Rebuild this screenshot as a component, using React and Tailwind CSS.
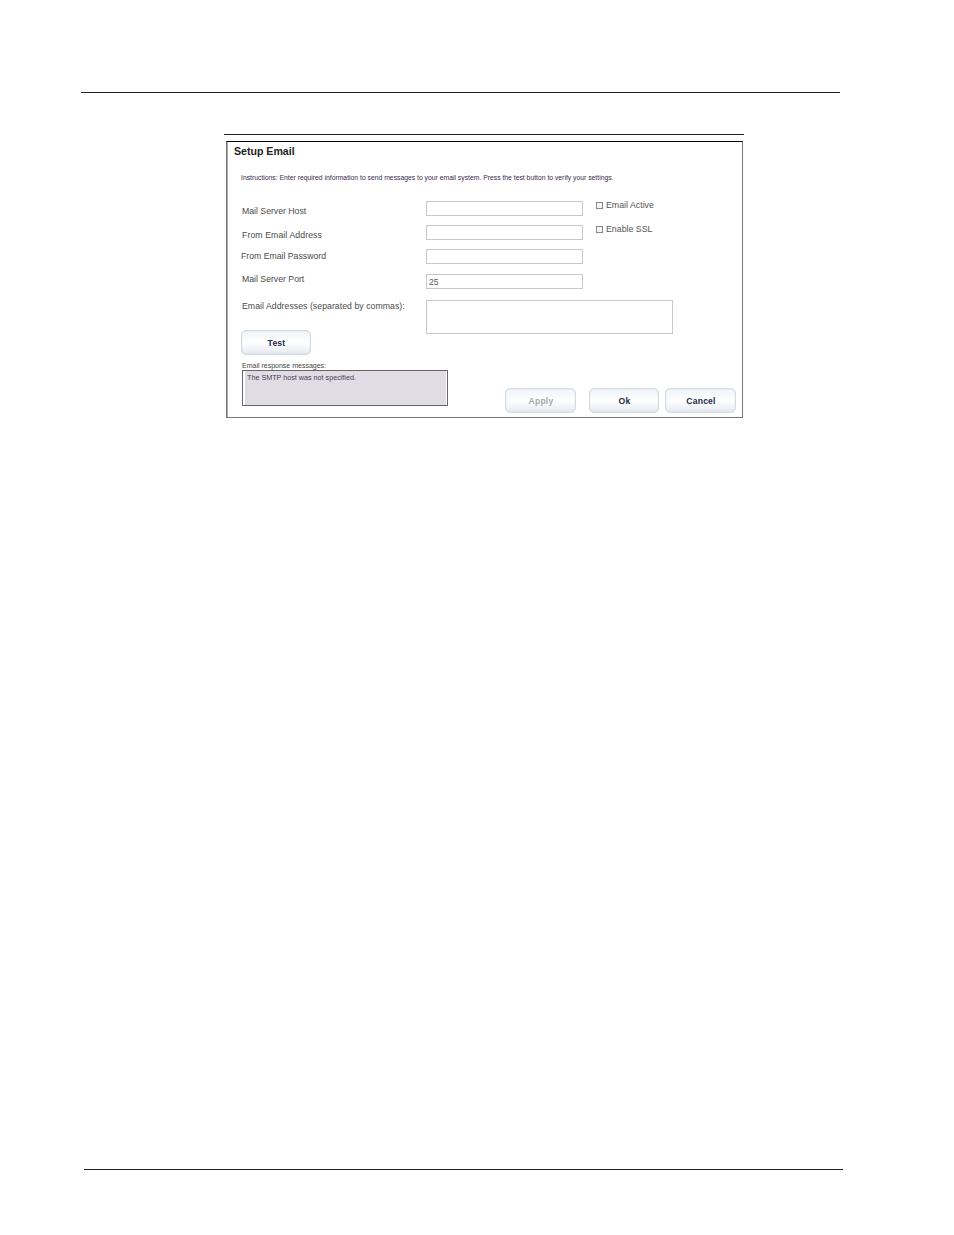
import React from 'react';

const font = { fontFamily: '"Liberation Sans", Arial, sans-serif' };

const TextBox = ({ value, className = 'w-[157px] h-[15px]' }) => (
  <div className={`${className} border border-[#c8c8c8] bg-white pl-[2px] text-[8.5px] leading-[15px] text-[#555]`}>{value}</div>
);

const Check = ({ label, className = '' }) => (
  <div className={`flex items-center gap-[3px] h-[10px] -mt-px ${className}`}>
    <span className="block w-[7px] h-[7px] border border-[#888] bg-[#f4f4f4]" />
    <span className="text-[8.8px] text-[#555] leading-[10px] whitespace-nowrap">{label}</span>
  </div>
);

const Row = ({ label, labelClass = 'w-[184px]', value, height, children }) => (
  <div className={`flex items-start ${height}`}>
    <div className={`shrink-0 text-[8.7px] leading-[10px] text-[#4a4a4a] whitespace-nowrap ${labelClass}`}>{label}</div>
    <TextBox value={value} />
    {children}
  </div>
);

const DialogButton = ({ text, disabled, className = 'w-[71px]' }) => (
  <div
    className={`h-[25px] pt-[2px] pl-px rounded-[5px] border border-[#d5dbe3] bg-gradient-to-b from-[#f0f3f8] via-white to-[#e4e9f0] shadow-[inset_0_0_1px_#b8c0cc] flex items-center justify-center text-[8.6px] font-bold tracking-[0.2px] ${disabled ? 'text-[#a5a9ad]' : 'text-[#1b2a4a]'} ${className}`}
  >
    {text}
  </div>
);

export default function App() {
  return (
    <div className="relative flex flex-col w-[954px] h-[1235px] bg-white overflow-hidden" style={font}>
      {/* page header rule */}
      <div className="mt-[92px] ml-[81px] w-[759px] h-px bg-[#222]" />

      {/* figure top rule */}
      <div className="mt-[41px] ml-[224px] w-[520px] h-px bg-[#222]" />

      {/* Setup Email dialog */}
      <div className="mt-[6px] ml-[226px] w-[517px] h-[277px] border border-t-black border-x-[#777] border-b-[#777] bg-white shadow-[inset_1px_0_0_#aaa]">
        <div className="pl-[7px] pt-[3px] text-[10.6px] leading-[13px] font-bold text-[#222]">Setup Email</div>
        <div className="pl-[14px] pt-[15px] h-[22px] text-[6.8px] leading-[9px] text-[#3a2a4a] whitespace-nowrap">
          Instructions: Enter required information to send messages to your email system. Press the test button to verify your settings.
        </div>

        <div className="mt-[21px] pl-[15px]">
          <Row label="Mail Server Host" labelClass="w-[184px] pt-[5px]" height="h-[24px]">
            <Check label="Email Active" className="ml-[13px]" />
          </Row>
          <Row label="From Email Address" labelClass="w-[184px] pt-[5px] tracking-[0.1px]" height="h-[24px]">
            <Check label="Enable SSL" className="ml-[13px]" />
          </Row>
          <Row label="From Email Password" labelClass="w-[185px] -ml-px pt-[2px]" height="h-[25px]" />
          <Row label="Mail Server Port" value="25" height="h-[26px]" />
          <div className="flex items-start h-[30px]">
            <div className="w-[184px] shrink-0 pt-px text-[8.7px] tracking-[0.05px] leading-[10px] text-[#4a4a4a] whitespace-nowrap">
              Email Addresses (separated by commas):
            </div>
            <TextBox className="w-[247px] h-[34px] shrink-0" />
          </div>
        </div>

        <div className="flex items-start pl-[14px]">
          <div className="w-[264px] shrink-0">
            <DialogButton text="Test" className="w-[70px]" />
            <div className="mt-[7px] pl-px text-[7px] leading-[8px] text-[#444]">Email response messages:</div>
            <div className="ml-px w-[206px] h-[36px] border border-[#666] bg-[#dfdde3] pt-[2px] pl-[4px] text-[7.2px] leading-[9px] text-[#4a3a55] shadow-[inset_2px_0_0_#fff,inset_-1px_0_0_#fff]">
              The SMTP host was not specified.
            </div>
          </div>
          <div className="mt-[58px] flex">
            <DialogButton text="Apply" disabled />
            <DialogButton text="Ok" className="ml-[13px] w-[70px]" />
            <DialogButton text="Cancel" className="ml-[6px] w-[71px]" />
          </div>
        </div>
      </div>

      {/* page footer rule */}
      <div className="mt-[751px] ml-[84px] w-[759px] h-px bg-[#222]" />
    </div>
  );
}
